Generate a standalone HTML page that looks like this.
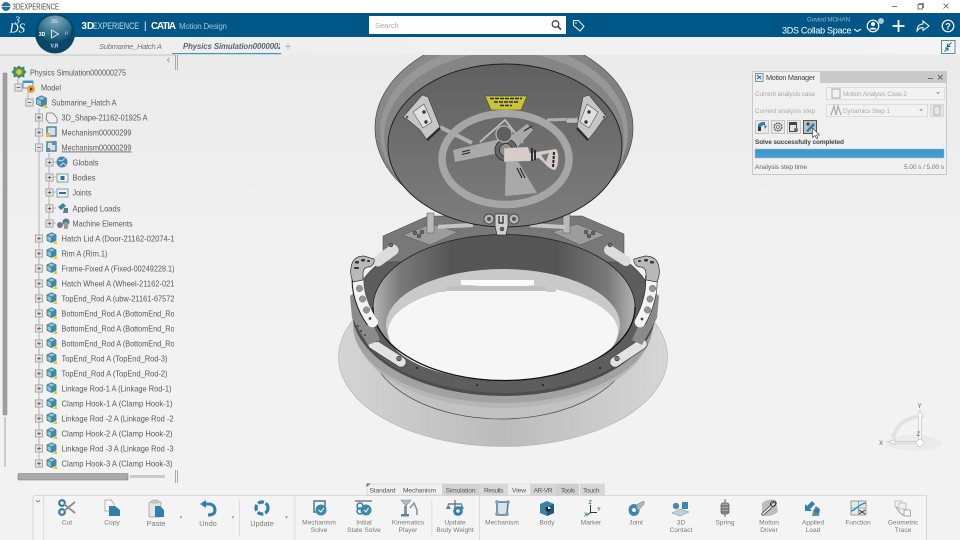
<!DOCTYPE html>
<html><head><meta charset="utf-8"><title>3DEXPERIENCE</title>
<style>
html,body{margin:0;padding:0;width:960px;height:540px;overflow:hidden;background:#eee}
svg{display:block;filter:blur(.35px);font-family:"Liberation Sans",sans-serif}
.t{font-size:8.200px;fill:#5a5a5a}
.l{font-size:6.600px;fill:#7a7a7a;text-anchor:middle}
</style></head><body>
<svg width="960" height="540" viewBox="0 0 960 540" xmlns="http://www.w3.org/2000/svg">
<defs>
<linearGradient id="bg" x1="0" y1="0" x2="0" y2="1"><stop offset="0" stop-color="#e9e9e9"/><stop offset=".5" stop-color="#f1f1f1"/><stop offset="1" stop-color="#f3f3f3"/></linearGradient>
<linearGradient id="sub" x1="0" y1="0" x2="1" y2="0"><stop offset="0" stop-color="#ececec"/><stop offset="1" stop-color="#f4f4f4"/></linearGradient>
<radialGradient id="comp" cx=".5" cy=".2" r=".8"><stop offset="0" stop-color="#86abc0"/><stop offset=".6" stop-color="#34728f"/><stop offset="1" stop-color="#0d4b6a"/></radialGradient>
<linearGradient id="flange" x1="0" y1="0" x2="1" y2="0"><stop offset="0" stop-color="#d4d4d4"/><stop offset=".5" stop-color="#bbbbbb"/><stop offset="1" stop-color="#d6d6d6"/></linearGradient>
<linearGradient id="wall" x1="0" y1="0" x2="1" y2="0"><stop offset="0" stop-color="#b5b5b5"/><stop offset=".1" stop-color="#7a7a7a"/><stop offset=".3" stop-color="#555"/><stop offset=".7" stop-color="#555"/><stop offset=".9" stop-color="#7a7a7a"/><stop offset="1" stop-color="#b5b5b5"/></linearGradient>
<linearGradient id="lid" x1="0" y1="0" x2="1" y2="1"><stop offset="0" stop-color="#8c8c8c"/><stop offset="1" stop-color="#7a7a7a"/></linearGradient>
<linearGradient id="plate" x1="0" y1="0" x2="0" y2="1"><stop offset="0" stop-color="#606060"/><stop offset=".5" stop-color="#6f6f6f"/><stop offset="1" stop-color="#7d7d7d"/></linearGradient>
<linearGradient id="bar" x1="0" y1="0" x2="0" y2="1"><stop offset="0" stop-color="#3d95c9"/><stop offset="1" stop-color="#4a9fd0"/></linearGradient>
<clipPath id="canvas"><rect x="178" y="55" width="782" height="430"/></clipPath>
<clipPath id="tree"><rect x="0" y="60" width="174" height="412"/></clipPath>
<clipPath id="tab2"><rect x="170" y="38" width="110" height="16"/></clipPath>
<symbol id="part" viewBox="0 0 16 16" overflow="visible">
<path d="M8 1 14 4V11L8 14 2 11V4Z" fill="#8cc3d6" stroke="#2f6c85" stroke-width="1"/>
<path d="M2 4 8 7 14 4M8 7V14" fill="none" stroke="#2f6c85" stroke-width="1"/>
<path d="M8 7 14 4V11L8 14Z" fill="#3f8aa8"/>
<path d="M10 16 L16 16 L14 11Z" fill="#d8c83a"/>
</symbol>
<symbol id="box" viewBox="0 0 10 10"><rect x="1" y="1" width="8" height="8" fill="#e2e2e2" stroke="#a5a5a5"/><path d="M3 5H7M5 3V7" stroke="#666"/></symbol>
<symbol id="boxm" viewBox="0 0 10 10"><rect x="1" y="1" width="8" height="8" fill="#e2e2e2" stroke="#a5a5a5"/><path d="M3 5H7" stroke="#666"/></symbol>
</defs>

<!-- canvas background -->
<rect width="960" height="540" fill="url(#bg)"/>

<!-- 3D MODEL -->
<g clip-path="url(#canvas)">
<!-- flange -->
<ellipse cx="503" cy="357" rx="164.500" ry="89.500" fill="url(#flange)" stroke="#b0b0b0" stroke-width=".6"/>
<!-- collar -->
<ellipse cx="501" cy="341" rx="132" ry="78" fill="#c2c2c2" stroke="#555" stroke-width=".8"/>
<ellipse cx="503" cy="330" rx="147" ry="78" fill="#b6b6b6"/>
<ellipse cx="503" cy="325" rx="150" ry="78" fill="#a2a2a2"/>
<!-- top ring face -->
<ellipse cx="504" cy="311" rx="152" ry="85" fill="#4c4c4c"/>
<ellipse cx="504" cy="310" rx="150.500" ry="83" fill="#5d5d5d"/>
<!-- back brackets -->
<path d="M383 236 428 216 582 216 624 234 624 262 383 262Z" fill="#787878" stroke="#444" stroke-width=".5"/>
<path d="M403 235 431 224 458 232 430 245Z" fill="#9c9c9c" stroke="#555" stroke-width=".5"/>
<path d="M605 235 577 224 552 232 580 245Z" fill="#9c9c9c" stroke="#555" stroke-width=".5"/>
<g fill="#666" stroke="#2a2a2a" stroke-width=".4"><circle cx="415" cy="233" r="2"/><circle cx="419" cy="236" r="2"/><circle cx="422" cy="232" r="2"/><circle cx="593" cy="233" r="2"/><circle cx="589" cy="236" r="2"/><circle cx="586" cy="232" r="2"/></g>
<!-- wall -->
<ellipse cx="504" cy="307.500" rx="131" ry="73" fill="url(#wall)" stroke="#222" stroke-width=".8"/>
<!-- lip + hole -->
<ellipse cx="503" cy="325" rx="117" ry="56" fill="#c9c9c9"/>
<ellipse cx="503" cy="332" rx="115" ry="48" fill="#f6f6f6"/>
<!-- through-hole bars -->
<rect x="461" y="280" width="73" height="5" fill="#fbfbfb"/>
<rect x="444" y="286" width="112" height="5" fill="#c4bfba"/>
<rect x="438" y="285" width="8" height="7" rx="2" fill="#cdc8c3"/><rect x="546" y="285" width="10" height="7" rx="2" fill="#cdc8c3"/>
<!-- ring inner line -->
<path d="M373 307A131 73.500 0 0 0 635 307" fill="none" stroke="#111" stroke-width="1.300"/>
<g fill="#2c2c2c"><circle cx="417" cy="368" r="1.100"/><circle cx="477" cy="385" r="1.100"/><circle cx="543" cy="385" r="1.100"/><circle cx="600" cy="368" r="1.100"/></g>

<!-- clamps: short pads -->
<path d="M378 261 393 250" stroke="#dcdcdc" stroke-width="11" stroke-linecap="round"/>
<path d="M609 250 626 261" stroke="#dcdcdc" stroke-width="10" stroke-linecap="round"/>
<path d="M373 344 401 362" stroke="#444" stroke-width="11" stroke-linecap="round"/>
<path d="M373 344 401 362" stroke="#e2e2e2" stroke-width="9.600" stroke-linecap="round"/>
<path d="M615 362 642 344" stroke="#444" stroke-width="11" stroke-linecap="round"/>
<path d="M615 362 642 344" stroke="#e2e2e2" stroke-width="9.600" stroke-linecap="round"/>
<g fill="#777" stroke="#2a2a2a" stroke-width=".6"><circle cx="399" cy="358.500" r="2.300"/><circle cx="617" cy="358.500" r="2.300"/><circle cx="376" cy="340" r="1.800"/><circle cx="639" cy="340" r="1.800"/><circle cx="391" cy="245" r="1.800"/><circle cx="610" cy="245" r="1.800"/></g>
<!-- left arm -->
<path d="M350 296 352 318 368 345 380 340 372 322 358 290Z" fill="#8b8b8b"/>
<g fill="#2b2b2b"><circle cx="358" cy="326" r=".9"/><circle cx="361" cy="331" r=".9"/><circle cx="365" cy="335" r=".9"/></g>
<path d="M358 275C356 290 362 308 372 322" fill="none" stroke="#222" stroke-width="12"/>
<path d="M358.500 275C356.500 290 362.500 308 372.500 322" fill="none" stroke="#f3f3f3" stroke-width="10.800" stroke-linecap="round"/>
<path d="M351 268C352 259 357 256 364 256L374 259C375 263 372 267 368 267 362 268 363 274 363 280L353 282C351 277 350 272 351 268Z" fill="#b9b9b9" stroke="#2e2e2e" stroke-width=".7"/>
<g fill="#969696" stroke="#666" stroke-width=".5"><circle cx="359.500" cy="288.500" r="3.200"/><circle cx="362.500" cy="299" r="3.200"/><circle cx="366.500" cy="310" r="3.200"/></g>
<circle cx="370" cy="318.500" r="1.400" fill="#444"/>
<g fill="#333"><rect x="355" y="261" width="4" height="2.500" rx="1"/><rect x="361" y="259" width="4" height="2.500" rx="1"/><rect x="367" y="260" width="3" height="2" rx="1"/><rect x="354" y="267" width="5" height="2" rx="1"/></g>
<!-- right arm -->
<path d="M659 296 657 318 642 345 632 340 640 322 652 290Z" fill="#8b8b8b"/>
<path d="M651 275C653 290 648 308 640 322" fill="none" stroke="#222" stroke-width="12"/>
<path d="M651 275C653 290 648 308 640 322" fill="none" stroke="#f3f3f3" stroke-width="10.800" stroke-linecap="round"/>
<path d="M659 268C658 259 652 256 645 256L634 259C633 263 636 267 641 267 647 268 646 274 646 280L657 282C659 277 660 272 659 268Z" fill="#b9b9b9" stroke="#2e2e2e" stroke-width=".7"/>
<g fill="#969696" stroke="#666" stroke-width=".5"><circle cx="652.500" cy="288.500" r="3.200"/><circle cx="650" cy="299" r="3.200"/><circle cx="647.500" cy="310" r="3.200"/></g>
<circle cx="642" cy="319" r="1.400" fill="#444"/>
<g fill="#333"><rect x="650" y="261" width="4" height="2.500" rx="1"/><rect x="644" y="259" width="4" height="2.500" rx="1"/><rect x="638" y="260" width="3" height="2" rx="1"/></g>

<!-- side posts -->
<rect x="427" y="213" width="7" height="20" fill="#b9b9b9" stroke="#555" stroke-width=".5"/>
<rect x="563" y="213" width="7" height="20" fill="#b9b9b9" stroke="#555" stroke-width=".5"/>
<rect x="438" y="224" width="35" height="4" fill="#c4c4c4" transform="rotate(-3 455 226)"/>
<rect x="530" y="224" width="35" height="4" fill="#c4c4c4" transform="rotate(3 547 226)"/>

<!-- LID -->
<ellipse cx="504" cy="128" rx="129" ry="93" fill="url(#lid)" stroke="#4a4a4a" stroke-width=".7"/>
<ellipse cx="504" cy="132" rx="124" ry="89" fill="#979797"/>
<ellipse cx="504" cy="137" rx="120" ry="85" fill="#858585"/>
<ellipse cx="505" cy="145.500" rx="117" ry="81.500" fill="url(#plate)" stroke="#1d1d1d" stroke-width=".9"/>
<!-- badge -->
<path d="M485 96H527L521 110H491Z" fill="#c9c437" stroke="#333" stroke-width=".5"/>
<path d="M490 98.500H522M494 102H518M500 105.500H512" stroke="#2a2a2a" stroke-width="1.500" stroke-dasharray="4 1"/>
<!-- rods -->
<path d="M440 127 472 143" stroke="#b0b0b0" stroke-width="4"/>
<path d="M547 120 578 119" stroke="#b0b0b0" stroke-width="3"/>
<!-- wheel internals -->
<path d="M480 142 505 120 523 143" fill="none" stroke="#bfbfbf" stroke-width="1.800"/>
<path d="M453 150 500 139 505 152 455 162Z" fill="#a9a9a9"/>
<path d="M505 141 527 124 533 130 513 152Z" fill="#a9a9a9"/>
<path d="M506 160 516 158 537 193 505 196Z" fill="#a9a9a9"/>
<circle cx="506" cy="150" r="11" fill="#666" stroke="#2a2a2a" stroke-width=".8"/>
<circle cx="506" cy="150" r="6.500" fill="#8e8e8e" stroke="#2b2b2b" stroke-width=".8"/>
<circle cx="504" cy="134" r="8" fill="#5e5e5e" stroke="#b5b5b5" stroke-width="1.200"/>
<path d="M462 152 470 150M462 154.500 470 152.500M524 131 532 126M517 168 522 178M520 168 525 178" stroke="#222" stroke-width="1.100"/>
<!-- wheel rim -->
<ellipse cx="505.500" cy="159" rx="63.500" ry="45.500" fill="none" stroke="#a6a6a6" stroke-width="7.500"/>
<!-- handle -->
<path d="M504 148 528 147 530 153 555 149C560 148 559 168 555 170 548 170 543 160 538 158L530 161 504 162Z" fill="#d5cec8" stroke="#888" stroke-width=".4"/>
<path d="M532 148V161M535 150V160" stroke="#222" stroke-width="1.800"/>
<path d="M554 152 553 168" stroke="#222" stroke-width="2" stroke-dasharray="3 1"/>
<path d="M541 155 549 153 546 162Z" fill="#777"/>
<!-- lid clamps -->
<g>
<path d="M403 117 422 95 428 97 440 127 427 140 420 130 408 120Z" fill="#c6c6c6" stroke="#3a3a3a" stroke-width=".6"/>
<path d="M413 112 424 104 432 122 423 128Z" fill="#e0e0e0" stroke="#555" stroke-width=".6"/>
<circle cx="424" cy="112" r="1.700" fill="#333"/><circle cx="426" cy="122" r="1.700" fill="#333"/><circle cx="407" cy="117" r="1.300" fill="#555"/>
<path d="M427 140 440 128" stroke="#2c2c2c" stroke-width="2.400"/>
<path d="M607 117 589 95 583 97 577 127 588 140 596 130 603 120Z" fill="#c6c6c6" stroke="#3a3a3a" stroke-width=".6"/>
<path d="M598 112 587 104 580 122 589 128Z" fill="#e0e0e0" stroke="#555" stroke-width=".6"/>
<circle cx="589" cy="112" r="1.700" fill="#333"/><circle cx="586" cy="122" r="1.700" fill="#333"/><circle cx="604" cy="117" r="1.300" fill="#555"/>
<path d="M588 140 577 128" stroke="#2c2c2c" stroke-width="2.400"/>
<rect x="566" y="118" width="12" height="5" rx="2" fill="#bbb" stroke="#555" stroke-width=".4"/>
</g>
<!-- hinge -->
<circle cx="489" cy="219" r="5" fill="#b5b5b5" stroke="#333" stroke-width=".7"/><circle cx="489" cy="219" r="2" fill="#555"/>
<circle cx="514" cy="219" r="5" fill="#b5b5b5" stroke="#333" stroke-width=".7"/><circle cx="514" cy="219" r="2" fill="#555"/>
<path d="M495 214H508V226L506 235H497L495 226Z" fill="#cfcfcf" stroke="#333" stroke-width=".7"/>
<path d="M499 216V223H503V216" fill="none" stroke="#222" stroke-width="1.200"/>
<circle cx="502" cy="229" r="2" fill="#666" stroke="#222" stroke-width=".4"/>
<!-- triad -->
<ellipse cx="914" cy="443" rx="28" ry="8" fill="#ebebeb"/>
<path d="M893 438C896 425 905 419 916 417" fill="none" stroke="#e2e2e2" stroke-width="4"/>
<path d="M918.500 443V417H916.500L920 410 923.500 417H921.500V443Z" fill="#f6f6f6" stroke="#c6c6c6" stroke-width=".7"/>
<path d="M918 441.500H895V439.500L887 442 895 444.500V443H918Z" fill="#f6f6f6" stroke="#c6c6c6" stroke-width=".7"/>
<circle cx="920" cy="443" r="3.500" fill="#fff" stroke="#c6c6c6" stroke-width=".7"/>
<text x="917.500" y="408" font-size="6" font-weight="bold" fill="#888">Y</text>
<text x="916.500" y="436" font-size="6" font-weight="bold" fill="#888">Z</text>
<text x="879" y="445" font-size="6" font-weight="bold" fill="#888">X</text>
</g>

<!-- TREE -->
<rect x="175" y="55" width="1" height="15" fill="#aaa"/><rect x="177" y="55" width="1" height="15" fill="#aaa"/>
<rect x="175" y="470" width="1" height="13" fill="#aaa"/><rect x="177" y="470" width="1" height="13" fill="#aaa"/>
<rect x="0" y="55" width="175" height="1" fill="#d6d6d6"/>
<path d="M169.500 58 167.500 60 169.500 62" fill="none" stroke="#888" stroke-width=".8"/>
<!-- vscroll -->
<rect x="3" y="73" width="4" height="342" fill="#9f9f9f" stroke="#888" stroke-width=".5"/>
<rect x="4" y="417" width="2" height="50" fill="#ccc"/>
<!-- hscroll -->
<rect x="18" y="473.500" width="110" height="6.500" rx="1" fill="#a9a9a9" stroke="#777" stroke-width=".6"/>
<rect x="130" y="475" width="35" height="3" fill="#c9c9c9"/>
<!-- tree lines -->
<g stroke="#a4a4a4" stroke-width=".8" fill="none">
<path d="M18 78V88H24"/><path d="M28 92V102H34"/><path d="M39 108V468"/><path d="M49 153V223"/>
</g>
<g stroke="#a4a4a4" stroke-width=".8">
<path d="M49 162H56M49 177H56M49 192H56M49 208H56M49 223H56"/>
</g>
<!-- root icons -->
<path d="M19 66 21 68 24 67 24 70 26 72 24 74 24 77 21 76 19 78 17 76 14 77 14 74 12 72 14 70 14 67 17 68Z" fill="#3f9d63" stroke="#35566b" stroke-width=".6"/>
<circle cx="19" cy="72" r="2.800" fill="#e8c23c"/>
<use href="#boxm" x="14" y="83" width="9" height="9"/>
<rect x="23" y="81" width="10" height="7" fill="#e9f3fa" stroke="#3f7fbf" stroke-width=".8"/><rect x="23" y="81" width="10" height="2" fill="#3f8fd5"/>
<circle cx="31" cy="89" r="4" fill="#ef9f3f"/><path d="M30 87 33 89 30 91Z" fill="#345"/>
<use href="#boxm" x="25" y="98" width="9" height="9"/>
<use href="#part" x="35" y="95" width="13" height="13"/>

<g clip-path="url(#tree)">
<text class="t" lengthAdjust="spacingAndGlyphs" x="30" y="75.500" textLength="96">Physics Simulation000000275</text>
<text class="t" lengthAdjust="spacingAndGlyphs" x="41" y="90.500" textLength="20">Model</text>
<text class="t" lengthAdjust="spacingAndGlyphs" x="51.500" y="105.500" textLength="65">Submarine_Hatch A</text>
<text class="t" lengthAdjust="spacingAndGlyphs" x="61.500" y="120.500" textLength="86">3D_Shape-21162-01925 A</text>
<text class="t" lengthAdjust="spacingAndGlyphs" x="61.500" y="135.500" textLength="70">Mechanism00000299</text>
<text class="t" lengthAdjust="spacingAndGlyphs" x="61.500" y="150.500" textLength="70" text-decoration="underline">Mechanism00000299</text>
<text class="t" lengthAdjust="spacingAndGlyphs" x="72.500" y="165.500" textLength="26">Globals</text>
<text class="t" lengthAdjust="spacingAndGlyphs" x="72.500" y="180.500" textLength="23">Bodies</text>
<text class="t" lengthAdjust="spacingAndGlyphs" x="72.500" y="195.500" textLength="19">Joints</text>
<text class="t" lengthAdjust="spacingAndGlyphs" x="72.500" y="211.500" textLength="48">Applied Loads</text>
<text class="t" lengthAdjust="spacingAndGlyphs" x="72.500" y="226.500" textLength="60">Machine Elements</text>
<text class="t" lengthAdjust="spacingAndGlyphs" x="61.500" y="241.500" textLength="113">Hatch Lid A (Door-21162-02074-1</text>
<text class="t" lengthAdjust="spacingAndGlyphs" x="61.500" y="256.500" textLength="46">Rim A (Rim.1)</text>
<text class="t" lengthAdjust="spacingAndGlyphs" x="61.500" y="271.500" textLength="113">Frame-Fixed A (Fixed-00249228.1)</text>
<text class="t" lengthAdjust="spacingAndGlyphs" x="61.500" y="286.500" textLength="113">Hatch Wheel A (Wheel-21162-021</text>
<text class="t" lengthAdjust="spacingAndGlyphs" x="61.500" y="301.500" textLength="113">TopEnd_Rod A (ubw-21161-67572</text>
<text class="t" lengthAdjust="spacingAndGlyphs" x="61.500" y="316.500" textLength="113">BottomEnd_Rod A (BottomEnd_Ro</text>
<text class="t" lengthAdjust="spacingAndGlyphs" x="61.500" y="331.500" textLength="113">BottomEnd_Rod A (BottomEnd_Ro</text>
<text class="t" lengthAdjust="spacingAndGlyphs" x="61.500" y="346.500" textLength="113">BottomEnd_Rod A (BottomEnd_Ro</text>
<text class="t" lengthAdjust="spacingAndGlyphs" x="61.500" y="361.500" textLength="106">TopEnd_Rod A (TopEnd_Rod-3)</text>
<text class="t" lengthAdjust="spacingAndGlyphs" x="61.500" y="376.500" textLength="106">TopEnd_Rod A (TopEnd_Rod-2)</text>
<text class="t" lengthAdjust="spacingAndGlyphs" x="61.500" y="391.500" textLength="110">Linkage Rod-1 A (Linkage Rod-1)</text>
<text class="t" lengthAdjust="spacingAndGlyphs" x="61.500" y="406.500" textLength="111">Clamp Hook-1 A (Clamp Hook-1)</text>
<text class="t" lengthAdjust="spacingAndGlyphs" x="61.500" y="421.500" textLength="112">Linkage Rod -2 A (Linkage Rod -2</text>
<text class="t" lengthAdjust="spacingAndGlyphs" x="61.500" y="436.500" textLength="111">Clamp Hook-2 A (Clamp Hook-2)</text>
<text class="t" lengthAdjust="spacingAndGlyphs" x="61.500" y="451.500" textLength="112">Linkage Rod -3 A (Linkage Rod -3</text>
<text class="t" lengthAdjust="spacingAndGlyphs" x="61.500" y="466.500" textLength="111">Clamp Hook-3 A (Clamp Hook-3)</text>
</g>
<!-- plus boxes level 3 -->
<use href="#box" x="34.500" y="113" width="9" height="9"/>
<use href="#box" x="34.500" y="128" width="9" height="9"/>
<use href="#boxm" x="34.500" y="143" width="9" height="9"/>
<use href="#box" x="34.500" y="234" width="9" height="9"/><use href="#box" x="34.500" y="249" width="9" height="9"/><use href="#box" x="34.500" y="264" width="9" height="9"/><use href="#box" x="34.500" y="279" width="9" height="9"/><use href="#box" x="34.500" y="294" width="9" height="9"/><use href="#box" x="34.500" y="309" width="9" height="9"/><use href="#box" x="34.500" y="324" width="9" height="9"/><use href="#box" x="34.500" y="339" width="9" height="9"/><use href="#box" x="34.500" y="354" width="9" height="9"/><use href="#box" x="34.500" y="369" width="9" height="9"/><use href="#box" x="34.500" y="384" width="9" height="9"/><use href="#box" x="34.500" y="399" width="9" height="9"/><use href="#box" x="34.500" y="414" width="9" height="9"/><use href="#box" x="34.500" y="429" width="9" height="9"/><use href="#box" x="34.500" y="444" width="9" height="9"/><use href="#box" x="34.500" y="459" width="9" height="9"/>
<use href="#box" x="45" y="158" width="9" height="9"/><use href="#box" x="45" y="173" width="9" height="9"/><use href="#box" x="45" y="188" width="9" height="9"/><use href="#box" x="45" y="204" width="9" height="9"/><use href="#box" x="45" y="219" width="9" height="9"/>
<!-- part icons -->
<use href="#part" x="45.500" y="232" width="12" height="12"/><use href="#part" x="45.500" y="247" width="12" height="12"/><use href="#part" x="45.500" y="262" width="12" height="12"/><use href="#part" x="45.500" y="277" width="12" height="12"/><use href="#part" x="45.500" y="292" width="12" height="12"/><use href="#part" x="45.500" y="307" width="12" height="12"/><use href="#part" x="45.500" y="322" width="12" height="12"/><use href="#part" x="45.500" y="337" width="12" height="12"/><use href="#part" x="45.500" y="352" width="12" height="12"/><use href="#part" x="45.500" y="367" width="12" height="12"/><use href="#part" x="45.500" y="382" width="12" height="12"/><use href="#part" x="45.500" y="397" width="12" height="12"/><use href="#part" x="45.500" y="412" width="12" height="12"/><use href="#part" x="45.500" y="427" width="12" height="12"/><use href="#part" x="45.500" y="442" width="12" height="12"/><use href="#part" x="45.500" y="457" width="12" height="12"/>
<!-- 3D shape icon -->
<path d="M47 113H53L57 118V123H49L46 119Z" fill="#eee" stroke="#777" stroke-width=".8"/>
<!-- mechanism icons -->
<g fill="none" stroke="#46768f" stroke-width="1.300"><rect x="47" y="127" width="9" height="9" fill="#cfe0e8"/><rect x="47" y="142" width="9" height="9" fill="#cfe0e8"/></g>
<rect x="46" y="133" width="4" height="4" fill="#e6b93d"/>
<rect x="46" y="148" width="4" height="4" fill="#5d8ea6"/><rect x="52" y="141" width="4" height="4" fill="#5d8ea6"/>
<!-- sub icons -->
<circle cx="62" cy="162" r="5.500" fill="#3f86ab"/><path d="M58 160 62 161 65 158M60 166 63 163 66 165" stroke="#bfe0ee" stroke-width="1" fill="none"/>
<rect x="57" y="174" width="11" height="8" fill="#eef3f6" stroke="#6b8696" stroke-width=".8"/><rect x="60.500" y="176" width="4" height="4" fill="#346f8f"/>
<rect x="57" y="189" width="11" height="8" fill="#eef3f6" stroke="#6b8696" stroke-width=".8"/><path d="M59 193H66" stroke="#346f8f" stroke-width="2"/>
<path d="M58 207 63 203 66 206 61 210Z" fill="#3f7fa6"/><path d="M64 208 68 208 68 213 63 213Z" fill="#607d8b"/>
<circle cx="60" cy="225" r="3" fill="#777"/><circle cx="66" cy="222" r="3.500" fill="#4e7d95"/><rect x="64" y="222" width="4" height="7" rx="1.500" fill="#999"/>

<!-- TITLE BAR -->
<rect width="960" height="13" fill="#fff"/>
<circle cx="6" cy="6.500" r="4.500" fill="#2b6f9c"/><path d="M1.500 6.500H10.500" stroke="#bcd" stroke-width="1"/>
<text x="12.500" y="9.500" font-size="7.800" fill="#444" textLength="46.500" lengthAdjust="spacingAndGlyphs">3DEXPERIENCE</text>
<path d="M892 6.500H897" stroke="#555" stroke-width=".8"/>
<rect x="918" y="4.500" width="4.500" height="4.500" fill="none" stroke="#555" stroke-width=".8"/><path d="M919.500 4.500V3.300H923.700V7.500H922.500" fill="none" stroke="#555" stroke-width=".7"/>
<path d="M943.500 3.500 948.500 8.500M948.500 3.500 943.500 8.500" stroke="#555" stroke-width=".8"/>

<!-- BLUE BAR -->
<rect y="13" width="960" height="24" fill="#005686"/>
<rect y="37" width="960" height="17.500" fill="url(#sub)"/>
<rect y="54" width="175" height="1" fill="#dcdcdc"/>
<text x="9.500" y="32.500" font-family="Liberation Serif" font-style="italic" font-size="13.500" fill="#fff" textLength="15.500" lengthAdjust="spacingAndGlyphs">DS</text>
<text x="15" y="23.500" font-family="Liberation Serif" font-style="italic" font-size="10" fill="#fff">3</text>
<text x="81.500" y="29" font-size="9.800" fill="#fff" font-weight="bold">3D</text>
<text x="93" y="29" font-size="9.600" fill="#c9dde9" textLength="46" lengthAdjust="spacingAndGlyphs">EXPERIENCE</text>
<text x="144" y="29" font-size="9.800" fill="#fff">|</text>
<text x="151" y="29" font-size="9.800" fill="#fff" font-weight="bold" textLength="25" lengthAdjust="spacing">CATIA</text>
<text x="179" y="29" font-size="8" fill="#9cc0d6" textLength="48">Motion Design</text>
<!-- compass -->
<circle cx="55" cy="33.500" r="20" fill="#0a4766"/>
<ellipse cx="55" cy="29" rx="16.500" ry="13.500" fill="url(#comp)"/>
<text x="54" y="23" font-size="5" fill="#d6e6ee" text-anchor="middle">3S</text>
<text x="42" y="36" font-size="5" font-weight="bold" fill="#fff" text-anchor="middle">3D</text>
<text x="66.500" y="35" font-size="5" fill="#d6e6ee" text-anchor="middle">i³</text>
<text x="54.500" y="47.500" font-size="5" font-weight="bold" fill="#cfe0ea" text-anchor="middle">V,R</text>
<path d="M51.500 30V38L58.500 34Z" fill="none" stroke="#e4eff5" stroke-width=".9"/>
<!-- search -->
<rect x="369" y="16" width="197" height="18" fill="#fff"/>
<text x="375" y="28" font-size="7.500" fill="#aaa">Search</text>
<circle cx="555.500" cy="24" r="3.300" fill="none" stroke="#444" stroke-width="1.300"/><path d="M558 26.500 561 29.500" stroke="#444" stroke-width="1.600"/>
<path d="M573.500 20.500 573.500 25.500 580 31 584 26.500 578.500 20.500Z" fill="none" stroke="#e5eef3" stroke-width="1.100"/><circle cx="576" cy="23" r=".8" fill="#fff"/>
<!-- right top -->
<text x="807" y="21.500" font-size="6.300" fill="#8fb6cb" textLength="43">Govind MOHAN</text>
<text x="782" y="33.500" font-size="9" fill="#fff" textLength="69.500">3DS Collab Space</text>
<path d="M854 29 857.500 31.500 861 29" fill="none" stroke="#fff" stroke-width="1.100"/>
<circle cx="873" cy="26" r="5.800" fill="none" stroke="#fff" stroke-width="1.200"/><circle cx="873" cy="24" r="2" fill="#fff"/><path d="M869.500 29.500C870 27 876 27 876.500 29.500Z" fill="#fff"/>
<circle cx="881" cy="21" r="3" fill="#b0c4cf"/>
<path d="M898.500 20V32M892.500 26H904.500" stroke="#fff" stroke-width="1.800"/>
<path d="M917 31C917 26 920 24 923 24V21L929 26 923 30.500V27.500C920.500 27.500 918.500 28.500 917 31Z" fill="none" stroke="#fff" stroke-width="1"/>
<circle cx="948" cy="26" r="5.800" fill="none" stroke="#fff" stroke-width="1.200"/>
<text x="948" y="29.500" font-size="9" font-weight="bold" fill="#fff" text-anchor="middle">?</text>

<!-- sub tabs -->
<text x="99" y="49" font-size="7.600" font-style="italic" fill="#777" textLength="63">Submarine_Hatch A</text>
<g clip-path="url(#tab2)"><text x="183" y="49" font-size="7.800" font-style="italic" font-weight="bold" fill="#5a6670" textLength="108">Physics Simulation000000275</text></g>
<rect x="172" y="53" width="109" height="1.200" fill="#4a8fc0"/>
<path d="M288 43.500V49.500M285 46.500H291" stroke="#bdbdbd" stroke-width="1.100"/>
<rect x="941.500" y="40.500" width="13.500" height="13" fill="#f3f7fa" stroke="#2d6e96" stroke-width=".8"/>
<path d="M951.500 42.500 947.500 46.500H950.500M947.500 46.500V43.500M944.500 51.500 948 48M945 48H948V51" fill="none" stroke="#1e6086" stroke-width="1"/>

<!-- MOTION MANAGER -->
<rect x="752.500" y="71.500" width="194" height="103" fill="#f0f0f0" stroke="#c9c9c9"/>
<rect x="753" y="72" width="193.500" height="11" fill="#c9c9c9"/>
<rect x="753" y="72" width="67" height="11.500" fill="#f0f0f0"/>
<rect x="755.500" y="73.500" width="7.500" height="8" fill="#e9eef2" stroke="#3f6f8c" stroke-width=".7"/><path d="M757 75 761 79M757 79 761 76" stroke="#2f6482" stroke-width="1"/>
<text x="766" y="80" font-size="7.300" fill="#444" textLength="49">Motion Manager</text>
<path d="M928 78.500H933" stroke="#666" stroke-width=".9"/><path d="M938 75 942.500 79.500M942.500 75 938 79.500" stroke="#666" stroke-width=".9"/>
<text x="755" y="96" font-size="6.400" fill="#a8a8a8" textLength="60">Current analysis case</text>
<rect x="826.500" y="87.500" width="118" height="12" fill="#f2f2f2" stroke="#dcdcdc"/>
<rect x="832" y="89" width="8" height="9" fill="none" stroke="#aaa"/>
<text x="843" y="96" font-size="6.500" fill="#aaa" textLength="64">Motion Analysis Case.2</text>
<path d="M936 92 940 92 938 94.500Z" fill="#aaa"/>
<text x="755" y="113" font-size="6.400" fill="#a8a8a8" textLength="60">Current analysis step</text>
<rect x="826.500" y="104.500" width="101" height="12" fill="#f2f2f2" stroke="#dcdcdc"/>
<path d="M831 115 834 106 836 115M836 115 838 106 841 115" fill="none" stroke="#aaa" stroke-width="1.200"/>
<text x="843" y="113" font-size="6.500" fill="#aaa" textLength="47">Dynamics Step 1</text>
<path d="M919 109 923 109 921 111.500Z" fill="#aaa"/>
<rect x="930.500" y="104.500" width="13" height="12" fill="#e6e6e6" stroke="#d6d6d6"/><rect x="934" y="106" width="6" height="9" fill="none" stroke="#b4b4b4"/>
<!-- manager buttons -->
<rect x="755.500" y="120.500" width="13" height="13" fill="#e8e8e8" stroke="#c4c4c4"/>
<path d="M758 131V126C758 123 761 122 765 122V125C762 125 761 126 761 128V131Z" fill="#2d7ba6"/><rect x="758" y="127" width="3" height="4" fill="#333"/><path d="M764 125 767 126 765 129Z" fill="#2d7ba6"/>
<rect x="771.500" y="120.500" width="13" height="13" fill="#e8e8e8" stroke="#c4c4c4"/>
<circle cx="778" cy="127" r="3.800" fill="none" stroke="#666" stroke-width="1.400" stroke-dasharray="2 .6"/><circle cx="778" cy="127" r="1.500" fill="none" stroke="#666" stroke-width=".8"/>
<rect x="787.500" y="120.500" width="13" height="13" fill="#e8e8e8" stroke="#c4c4c4"/>
<rect x="789.500" y="122.500" width="7" height="9" fill="#e2e2e2" stroke="#444"/><rect x="789.500" y="122.500" width="7" height="2.500" fill="#444"/><circle cx="796" cy="130" r="2" fill="#666"/>
<rect x="803.500" y="120.500" width="13" height="13" fill="#b9c4ca" stroke="#555"/>
<path d="M806 131 813 123 815 125 808 132Z" fill="#2d7ba6"/><path d="M806 124H810M808 122V126" stroke="#222" stroke-width="1"/>
<path d="M812.500 128V137.500L815 135.500 816.500 138.500 818 138 816.500 135H819.500Z" fill="#fff" stroke="#333" stroke-width=".6"/>
<text x="755" y="144" font-size="6.500" font-weight="bold" fill="#444" textLength="89">Solve successfully completed</text>
<rect x="755" y="149" width="189" height="9" fill="url(#bar)" stroke="#9dbccf" stroke-width=".5"/>
<text x="755" y="169" font-size="6.600" fill="#666" textLength="52">Analysis step time</text>
<text x="904" y="169" font-size="6.600" fill="#777" textLength="40">5.00 s / 5.00 s</text>

<!-- TOOLBAR TABS -->
<path d="M367 495V484H604.500V495Z" fill="#f0f0f0" stroke="#c8c8c8" stroke-width=".6"/>
<rect x="442" y="484" width="37" height="11" fill="#d2d2d2"/>
<rect x="509" y="484" width="1" height="11" fill="#bbb"/>
<rect x="509" y="484" width="20" height="11" fill="#ececec"/>
<rect x="530" y="484" width="26" height="11" fill="#d6d6d6"/>
<rect x="556" y="484" width="23" height="11" fill="#cfcfcf"/>
<rect x="580" y="484" width="24" height="11" fill="#d6d6d6"/>
<rect x="479" y="484" width="29" height="11" fill="#d8d8d8"/>
<path d="M366.500 483.500H371L366.500 487Z" fill="#2f7fb5"/>
<g font-size="6.600" fill="#555">
<text x="369.500" y="492.500" textLength="26">Standard</text>
<text x="403" y="492.500" textLength="33">Mechanism</text>
<text x="445.500" y="492.500" textLength="30">Simulation</text>
<text x="484" y="492.500" textLength="19.500">Results</text>
<text x="512" y="492.500" textLength="14">View</text>
<text x="533.500" y="492.500" textLength="19">AR-VR</text>
<text x="561" y="492.500" textLength="14">Tools</text>
<text x="583" y="492.500" textLength="16.500">Touch</text>
</g>
<!-- TOOLBAR PANEL -->
<path d="M33 540V498Q33 495.500 36 495.500H926.500V540" fill="#f4f4f4" stroke="#cfcfcf" stroke-width=".8"/>
<rect x="43.300" y="496" width=".8" height="44" fill="#d4d4d4"/>
<path d="M36 500.500 38 502 40 500.500" fill="none" stroke="#777" stroke-width=".8"/>
<g fill="#d9d9d9"><rect x="239" y="500" width=".8" height="36"/><rect x="294.500" y="496" width=".8" height="44"/><rect x="431.500" y="500" width=".8" height="36"/><rect x="479" y="496" width=".8" height="44"/></g>
<!-- labels -->
<text class="l" x="67" y="524.500">Cut</text>
<text class="l" x="112" y="524.500">Copy</text>
<text class="l" x="156" y="526" style="font-size:7.300px">Paste</text>
<text class="l" x="208" y="526" style="font-size:7.300px">Undo</text>
<text class="l" x="262" y="526" style="font-size:7.300px">Update</text>
<text class="l" x="319" y="524.500">Mechanism</text><text class="l" x="319" y="532">Solve</text>
<text class="l" x="364" y="524.500">Initial</text><text class="l" x="364" y="532">State Solve</text>
<text class="l" x="408" y="524.500">Kinematics</text><text class="l" x="408" y="532">Player</text>
<text class="l" x="455" y="524.500">Update</text><text class="l" x="455" y="532">Body Weight</text>
<text class="l" x="502" y="524.500">Mechanism</text>
<text class="l" x="547" y="524.500">Body</text>
<text class="l" x="591" y="524.500">Marker</text>
<text class="l" x="636" y="524.500">Joint</text>
<text class="l" x="681" y="524.500">3D</text><text class="l" x="681" y="532">Contact</text>
<text class="l" x="725" y="524.500">Spring</text>
<text class="l" x="769" y="524.500">Motion</text><text class="l" x="769" y="532">Driver</text>
<text class="l" x="813" y="524.500">Applied</text><text class="l" x="813" y="532">Load</text>
<text class="l" x="858" y="524.500">Function</text>
<text class="l" x="903" y="524.500">Geometric</text><text class="l" x="903" y="532">Trace</text>
<!-- dropdown arrows -->
<g fill="#888"><path d="M179.500 516.500H182.500L181 518.500Z"/><path d="M231.500 516.500H234.500L233 518.500Z"/><path d="M285 516.500H288L286.500 518.500Z"/></g>
<!-- cut -->
<g fill="none" stroke="#2b7ca6" stroke-width="2.200"><circle cx="62" cy="503" r="2.800"/><circle cx="62" cy="512" r="2.800"/></g>
<path d="M64 504 75 513M64 511 75 502" stroke="#8b9297" stroke-width="1.900"/>
<!-- copy -->
<path d="M105 500H111L114 504V511H105Z" fill="#f7f7f7" stroke="#999" stroke-width=".7"/>
<path d="M109 506H115L120 510V516H109Z" fill="#2f80ad"/>
<!-- paste -->
<rect x="149" y="502" width="12" height="15" rx="1" fill="#e4e4e4" stroke="#999" stroke-width=".7"/><rect x="151.500" y="500" width="7" height="3" rx="1" fill="#ccc" stroke="#999" stroke-width=".5"/>
<path d="M155 506H160L164 510V517H155Z" fill="#2f80ad"/>
<!-- undo -->
<path d="M204 504H209C213 504 215 507 215 510 215 513 213 515 208 515" fill="none" stroke="#2f80ad" stroke-width="3"/>
<path d="M200 504 206 500V508Z" fill="#2f80ad"/>
<!-- update -->
<circle cx="262" cy="508" r="6" fill="none" stroke="#2f80ad" stroke-width="3.200" stroke-dasharray="6 2"/>
<circle cx="262" cy="508" r="3.500" fill="#f4f4f4"/>
<!-- mechanism solve -->
<rect x="314" y="501" width="11" height="11" fill="none" stroke="#5a7f93" stroke-width="1.600"/>
<circle cx="321" cy="510" r="5.500" fill="#3f88ad"/><path d="M318.500 510 321 512 324 508" fill="none" stroke="#fff" stroke-width="1"/>
<!-- initial state -->
<path d="M355 501H372" stroke="#666" stroke-width="1.300"/>
<circle cx="360" cy="506" r="3" fill="none" stroke="#2f7ca6" stroke-width="1.500"/><circle cx="360" cy="511" r="3" fill="none" stroke="#2f7ca6" stroke-width="1.500"/>
<circle cx="366" cy="510" r="5.500" fill="#3f88ad"/><path d="M364 510 366 512 368.500 508" fill="none" stroke="#fff" stroke-width="1"/>
<!-- kin player -->
<path d="M401 500H411L406 506Z" fill="#b4bcc0" stroke="#7f8a90" stroke-width=".6"/><rect x="404" y="506" width="3" height="9" fill="#8a9499"/><rect x="401" y="514" width="8" height="2.500" fill="#5f8499"/>
<path d="M410 508 414 503 417 510V515" fill="none" stroke="#8a9499" stroke-width="1.600"/>
<!-- body weight -->
<path d="M448 504H462M455 500V515" stroke="#566b78" stroke-width="1.200"/>
<path d="M446 509 448 504 451 509Z M459 509 462 504 464 509Z" fill="#4f8daf"/>
<circle cx="458" cy="511" r="4.800" fill="#2f80ad"/><circle cx="458" cy="511" r="1.800" fill="#f4f4f4"/>
<!-- mechanism -->
<path d="M497 502H508L507 515H497Z" fill="#d6e4ec" stroke="#4e7b93" stroke-width="1.500"/>
<g fill="#8a9ba5"><circle cx="497" cy="502" r="1.800"/><circle cx="508" cy="502" r="1.800"/><circle cx="507" cy="514" r="1.800"/><circle cx="497" cy="514" r="1.800"/></g>
<!-- body -->
<path d="M547 501 554 504V513L547 516 540 513V504Z" fill="#3a82a8"/>
<path d="M547 507 554 504V513L547 516Z" fill="#1f5a7a"/>
<circle cx="548" cy="509" r="2.500" fill="#222"/><path d="M548 509V506.500A2.500 2.500 0 0 1 550.500 509Z" fill="#fff"/>
<!-- marker -->
<path d="M590.500 505V512.500H597M590.500 512.500 587 515" fill="none" stroke="#333" stroke-width="1"/>
<text x="588.500" y="504" font-size="5.500" font-weight="bold" fill="#2f7ca6">Z</text><text x="597" y="511" font-size="5.500" font-weight="bold" fill="#2f7ca6">Y</text><text x="584" y="516.500" font-size="5.500" font-weight="bold" fill="#2f7ca6">X</text>
<!-- joint -->
<ellipse cx="634" cy="510" rx="5.500" ry="6" fill="#3d86ac"/><circle cx="634" cy="510" r="2" fill="#f4f4f4"/>
<path d="M636 505 644 501 644 504 638 511Z" fill="#aab8bf" stroke="#5f7a88" stroke-width=".5"/>
<!-- 3d contact -->
<rect x="682" y="502" width="6" height="7" fill="#3f86ab"/><circle cx="676" cy="506" r="3.200" fill="#59859c"/>
<path d="M672 513 680 509 689 512 680 516Z" fill="#bcd2dd" stroke="#6e8d9c" stroke-width=".5"/>
<!-- spring -->
<rect x="721" y="503" width="8" height="11" rx="2" fill="#a8a8a8" stroke="#555" stroke-width=".7"/><path d="M725 499V503M725 514V517M721 506H729M721 509H729M721 512H729" stroke="#555" stroke-width=".9"/>
<!-- motion driver -->
<path d="M762 503Q769 498 776 500L778 512Q770 518 762 515Z" fill="#bdbdbd"/>
<path d="M763 514 775 503" stroke="#333" stroke-width="3.200" stroke-linecap="round"/><path d="M763 514 775 503" stroke="#eee" stroke-width="1.700" stroke-linecap="round"/>
<circle cx="773" cy="504" r="2.500" fill="none" stroke="#333"/>
<!-- applied load -->
<path d="M812 501 807 506 805 504 805 511 812 511 810 509 815 504Z" fill="#2f80ad"/>
<path d="M813 511 816 506 820 509 819 516 812 516Z" fill="#6d8a99"/><circle cx="817" cy="511" r="2.500" fill="#2f80ad"/>
<!-- function -->
<rect x="851" y="501" width="15" height="14" fill="#dfeaf0" stroke="#777" stroke-width=".7"/>
<path d="M851 508H866M858.500 501V515" stroke="#777" stroke-width=".6"/>
<path d="M851 511C855 511 858 504 866 503" fill="none" stroke="#2f80ad" stroke-width="1.200"/>
<path d="M859 510 865 514" stroke="#333" stroke-width="1"/><path d="M865 510 859 514" stroke="#333" stroke-width="1"/>
<!-- geometric trace -->
<rect x="895" y="501" width="7" height="6" fill="#f1f1f1" stroke="#b9b9b9" stroke-width=".8"/>
<rect x="899" y="503" width="7" height="6" fill="#f1f1f1" stroke="#b9b9b9" stroke-width=".8"/>
<rect x="904" y="510" width="6.500" height="6" fill="#f6f6f6" stroke="#999" stroke-width=".8"/>
<path d="M896 507C899 512 902 515 904 515" fill="none" stroke="#6fa5c4" stroke-width="1"/>
</svg>
</body></html>
